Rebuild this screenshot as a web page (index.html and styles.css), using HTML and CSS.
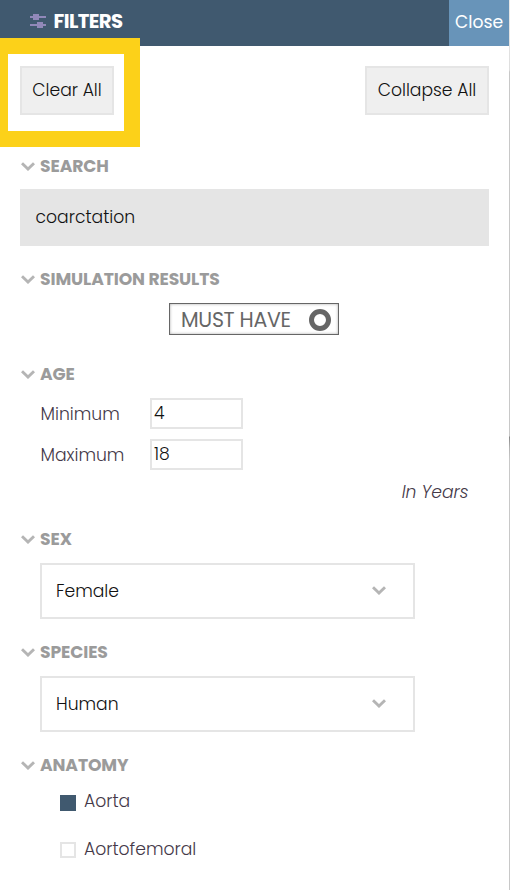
FILE: index.html
```html
<!DOCTYPE html>
<html lang="en">
<head>
<meta charset="utf-8">
<title>Filters</title>
<link rel="stylesheet" href="styles.css">
</head>
<body>
<svg class="defs" width="0" height="0"><symbol id="chevron" viewBox="0 0 14 9"><path d="M1 1.200 7 7l6-5.800" fill="none" stroke="currentColor" stroke-width="2.900"/></symbol></svg>
<div class="panel">
  <header class="header">
    <svg class="sliders" viewBox="0 0 16 14"><path d="M0 2h16v2H0zM0 10h16v2H0zM3 0h6v6H3zM7 8h6v6H7z"/></svg>
    <h1 class="title">FILTERS</h1>
    <button class="close">Close</button>
  </header>
  <main class="body">
    <div class="actions">
      <button class="button clear">Clear All</button>
      <button class="button collapse">Collapse All</button>
      <div class="highlight"></div>
    </div>

    <section class="group search">
      <h2 class="heading"><svg class="chevron"><use href="#chevron"/></svg><span>SEARCH</span></h2>
      <div class="query">coarctation</div>
    </section>

    <section class="group simulation">
      <h2 class="heading"><svg class="chevron"><use href="#chevron"/></svg><span>SIMULATION RESULTS</span></h2>
      <div class="toggle"><span>MUST HAVE</span><i class="ring"></i></div>
    </section>

    <section class="group age">
      <h2 class="heading"><svg class="chevron"><use href="#chevron"/></svg><span>AGE</span></h2>
      <div class="row"><span class="label">Minimum</span><div class="number">4</div></div>
      <div class="row"><span class="label">Maximum</span><div class="number">18</div></div>
      <p class="units">In Years</p>
    </section>

    <section class="group sex">
      <h2 class="heading"><svg class="chevron"><use href="#chevron"/></svg><span>SEX</span></h2>
      <div class="select"><span>Female</span><svg class="chevron"><use href="#chevron"/></svg></div>
    </section>

    <section class="group species">
      <h2 class="heading"><svg class="chevron"><use href="#chevron"/></svg><span>SPECIES</span></h2>
      <div class="select"><span>Human</span><svg class="chevron"><use href="#chevron"/></svg></div>
    </section>

    <section class="group anatomy">
      <h2 class="heading"><svg class="chevron"><use href="#chevron"/></svg><span>ANATOMY</span></h2>
      <div class="option"><i class="box checked"></i><span>Aorta</span></div>
      <div class="option"><i class="box"></i><span>Aortofemoral</span></div>
    </section>
  </main>
  <div class="edge"></div>
</div>
</body>
</html>
```
FILE: styles.css
```css
* { box-sizing: border-box; }
body { margin: 0; background: #fff; font: 300 17.200px/24px Poppins, Inter, sans-serif; color: #443848; }
h1, h2, p { margin: 0; }
button { font: inherit; border-radius: 0; padding: 0; white-space: nowrap; }
.defs { position: absolute; }
.panel { position: relative; width: 510px; height: 890px; overflow: hidden; }
.header { display: flex; align-items: center; height: 46px; padding-left: 30px; background: #40596f; }
.sliders { width: 16px; height: 14px; margin-top: -4px; fill: #9188b9; }
.title { margin: -5px 0 0 7.500px; font-size: 19.700px; font-weight: 700; letter-spacing: -.6px; color: #fff; }
.close { width: 60px; height: 46px; margin: 0 1px 0 auto; padding-bottom: 3px; border: 0; background: #6894b9; color: #fff; font-size: 17.200px; font-weight: 400; }
.body { padding: 20px 21px 0 20px; }
.actions { position: relative; display: flex; justify-content: space-between; height: 49px; }
.button { height: 49px; padding-bottom: 1px; border: 2px solid #e5e5e5; background: #efefef; color: #111; }
.clear { width: 94px; }
.collapse { width: 124px; }
.highlight { position: absolute; left: -20px; top: -28px; width: 140px; height: 109px; border: 16px solid #fcd119; border-left-width: 8px; }
.group { overflow: hidden; }
.search { height: 113px; margin-top: 39px; }
.simulation { height: 95px; }
.age { height: 165px; }
.sex, .species { height: 113px; }
.heading { display: flex; align-items: center; gap: 5px; height: 24px; padding-left: 1px; font-size: 17.200px; font-weight: 700; letter-spacing: -.12px; color: #9b9b9b; white-space: nowrap; }
.chevron { width: 14px; height: 9px; color: #b5b5b5; }
.query { display: flex; align-items: center; height: 57px; margin-top: 11px; padding: 0 0 1px 15.500px; background: #e5e5e5; color: #111; }
.toggle { display: flex; align-items: center; justify-content: space-between; width: 170px; height: 32px; margin: 12px 0 0 149px; padding: 0 7px 0 11px; border: 1px solid #666; box-shadow: inset 0 0 3px #aaa; color: #666; font-size: 20.500px; font-weight: 400; letter-spacing: -.3px; }
.toggle span { padding-top: 1px; }
.ring { width: 22px; height: 22px; margin-top: 1px; border: 5px solid #666; border-radius: 50%; }
.row { display: flex; align-items: center; height: 31px; margin: 0 0 10px 20px; }
.age .heading { margin-bottom: 12px; }
.label { width: 110px; padding-left: .5px; }
.number { width: 93px; height: 31px; padding: 1px 0 0 2px; border: 2px solid #e5e5e5; color: #111; }
.units { margin: 0 20.500px 0 0; text-align: right; font-style: italic; }
.select { display: flex; align-items: center; justify-content: space-between; width: 375px; height: 56px; margin: 12px 0 0 20px; padding: 0 27px 1px 14px; border: 2px solid #e5e5e5; color: #111; }
.option { display: flex; align-items: center; gap: 8px; height: 24px; margin: 12px 0 24px 40px; }
.option + .option { margin-top: 0; }
.option + .option .box { margin-top: 1px; }
.box { width: 16px; height: 16px; margin-top: 3px; border: 2px solid #e5e5e5; }
.checked { border-color: #40596f; background: #40596f; }
.edge { position: absolute; right: 0; top: 0; width: 1px; height: 890px; background: linear-gradient(#e8e8e8 0, #dedede 70px, #c8c8c8 72px, #c8c8c8 436px, #888 437px, #b5b5b5 448px, #c8c8c8 460px); }
```
